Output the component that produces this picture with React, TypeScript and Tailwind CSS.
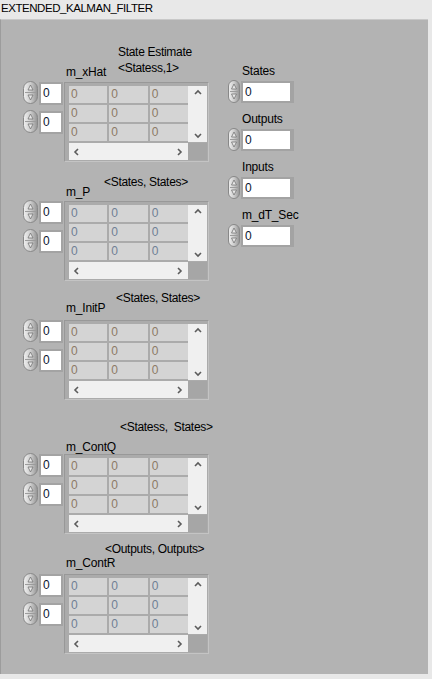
import React, { useId } from "react";

type ArrayBlock = {
  label: string;
  header: string[];
  headerClass: string;
  labelClass: string;
  bodyClass: string;
  zeroClass: string;
};

const blocks: ArrayBlock[] = [
  {
    label: "m_xHat",
    header: ["State Estimate", "<Statess,1>"],
    headerClass: "mt-[24px] pl-[95px]",
    labelClass: "mt-[-12px]",
    bodyClass: "mt-[2px]",
    zeroClass: "text-[#8c7a66]",
  },
  {
    label: "m_P",
    header: ["<States, States>"],
    headerClass: "mt-[12px] pl-[81px]",
    labelClass: "mt-[-6px]",
    bodyClass: "mt-[1px]",
    zeroClass: "text-[#6f7f94]",
  },
  {
    label: "m_InitP",
    header: ["<States, States>"],
    headerClass: "mt-[9px] pl-[93px]",
    labelClass: "mt-[-6px]",
    bodyClass: "mt-[4px]",
    zeroClass: "text-[#8c7a66]",
  },
  {
    label: "m_ContQ",
    header: ["<Statess,  States>"],
    headerClass: "mt-[19px] pl-[97px]",
    labelClass: "mt-[4px]",
    bodyClass: "mt-[-1px]",
    zeroClass: "text-[#8c7a66]",
  },
  {
    label: "m_ContR",
    header: ["<Outputs, Outputs>"],
    headerClass: "mt-[7px] pl-[82px]",
    labelClass: "mt-[-2px]",
    bodyClass: "mt-[3px]",
    zeroClass: "text-[#6f7f94]",
  },
];

const scalars = ["States", "Outputs", "Inputs", "m_dT_Sec"];

const Spinner = ({ width = 15 }: { width?: number }) => {
  const id = useId();
  const mid = width / 2;
  return (
    <svg width={width} height="23" viewBox={`0 0 ${width} 23`} className="shrink-0">
      <defs>
        <linearGradient id={id} x1="0" x2="1" y1="0" y2="0">
          <stop offset="0" stopColor="#f0f0f0" />
          <stop offset="0.5" stopColor="#cdcdcd" />
          <stop offset="1" stopColor="#939393" />
        </linearGradient>
      </defs>
      <rect
        x="0.5"
        y="0.5"
        width={width - 1}
        height="22"
        rx={(width - 1) / 2}
        fill={`url(#${id})`}
        stroke="#888888"
      />
      <line x1="2" y1="11.5" x2={width - 2} y2="11.5" stroke="#9c9c9c" />
      <path
        d={`M${mid} 4 L${mid + 2.5} 9 L${mid - 2.5} 9 Z`}
        fill="#e8e8e8"
        stroke="#747474"
        strokeWidth="0.8"
      />
      <path
        d={`M${mid} 19 L${mid + 2.5} 14 L${mid - 2.5} 14 Z`}
        fill="#e8e8e8"
        stroke="#747474"
        strokeWidth="0.8"
      />
    </svg>
  );
};

const Chevron = ({ dir }: { dir: "up" | "down" | "left" | "right" }) => {
  const d = {
    up: "M1 5 L4 2 L7 5",
    down: "M1 2 L4 5 L7 2",
    left: "M5 1 L2 4 L5 7",
    right: "M2 1 L5 4 L2 7",
  }[dir];
  const horiz = dir === "up" || dir === "down";
  return (
    <svg width={horiz ? 8 : 7} height={horiz ? 7 : 8} viewBox={horiz ? "0 0 8 7" : "0 0 7 8"}>
      <path d={d} fill="none" stroke="#5c5c5c" strokeWidth="1.6" />
    </svg>
  );
};

const IndexBox = ({ className }: { className?: string }) => (
  <div className={`flex items-start ${className ?? ""}`}>
    <Spinner />
    <div className="ml-[1px] mt-[1px] h-[23px] w-[24px] bg-[#a3a3a3] pl-[2px] pt-[2px]">
      <div className="h-[19px] w-[20px] bg-white pl-[2px] leading-[19px] text-[#0c1630]">0</div>
    </div>
  </div>
);

const Grid = ({ zeroClass }: { zeroClass: string }) => (
  <div className="flex h-[80px] w-[145px] flex-col border border-b-[#c4c4c4] border-l-[#989898] border-r-[#c4c4c4] border-t-[#989898] bg-[#ababab] pl-[4px] pr-[1px] pt-[3px]">
    <div className="flex">
      <div className="grid w-[119px] grid-cols-3 grid-rows-[17px_17px_17px] gap-[2px]">
        {Array.from({ length: 9 }).map((_, i) => (
          <div key={i} className={`bg-[#d4d4d4] pl-[2px] leading-[17px] ${zeroClass}`}>
            0
          </div>
        ))}
      </div>
      <div className="flex h-[56px] w-[19px] flex-col items-center justify-between bg-[#f0f0f0] pb-[3px] pt-[3px]">
        <Chevron dir="up" />
        <Chevron dir="down" />
      </div>
    </div>
    <div className="mt-[1px] flex">
      <div className="flex h-[17px] w-[119px] items-center justify-between bg-[#f0f0f0] pl-[4px] pr-[5px]">
        <Chevron dir="left" />
        <Chevron dir="right" />
      </div>
      <div className="h-[17px] w-[19px] bg-[#a6a6a6]" />
    </div>
  </div>
);

const ArrayControl = ({ block }: { block: ArrayBlock }) => (
  <div className="flex flex-col">
    <div className={`tracking-[-0.3px] ${block.headerClass}`}>
      {block.header.map((line) => (
        <div key={line} className="h-[16px] whitespace-pre leading-[16px]">
          {line}
        </div>
      ))}
    </div>
    <div className={`h-[16px] pl-[43px] leading-[16px] tracking-[-0.2px] ${block.labelClass}`}>
      {block.label}
    </div>
    <div className={`flex items-start ${block.bodyClass}`}>
      <div className="mt-[-1px] flex w-[41px] flex-col">
        <IndexBox />
        <IndexBox className="mt-[5px]" />
      </div>
      <Grid zeroClass={block.zeroClass} />
    </div>
  </div>
);

const ScalarControl = ({ label, first }: { label: string; first: boolean }) => (
  <div className={`flex flex-col ${first ? "" : "mt-[8px]"}`}>
    <div className="h-[16px] pl-[14px] leading-[16px] tracking-[-0.2px]">{label}</div>
    <div className="mt-[1px] flex items-start">
      <Spinner width={12} />
      <div className="ml-[1px] mt-[1px] h-[22px] w-[53px] bg-[#a3a3a3] pl-[2px] pt-[2px]">
        <div className="h-[18px] w-[47px] bg-white pl-[2px] leading-[18px] text-[#0c1630]">0</div>
      </div>
    </div>
  </div>
);

export default function App() {
  return (
    <div className="h-[679px] w-[432px] overflow-hidden bg-[#e8e8e8] font-['Liberation_Sans',Arial,sans-serif] text-[12px] text-black">
      <div className="h-[19px] pl-[1px] text-[11.5px] leading-[16px] tracking-[-0.45px] text-black">
        EXTENDED_KALMAN_FILTER
      </div>
      <div className="flex h-[655px] w-[428px] border-l border-t border-l-[#9c9c9c] border-t-[#c8c8c8] bg-[#b3b3b3]">
        <div className="flex w-[227px] flex-col pl-[22px]">
          {blocks.map((b) => (
            <ArrayControl key={b.label} block={b} />
          ))}
        </div>
        <div className="flex flex-col pt-[43px]">
          {scalars.map((s, i) => (
            <ScalarControl key={s} label={s} first={i === 0} />
          ))}
        </div>
      </div>
    </div>
  );
}
